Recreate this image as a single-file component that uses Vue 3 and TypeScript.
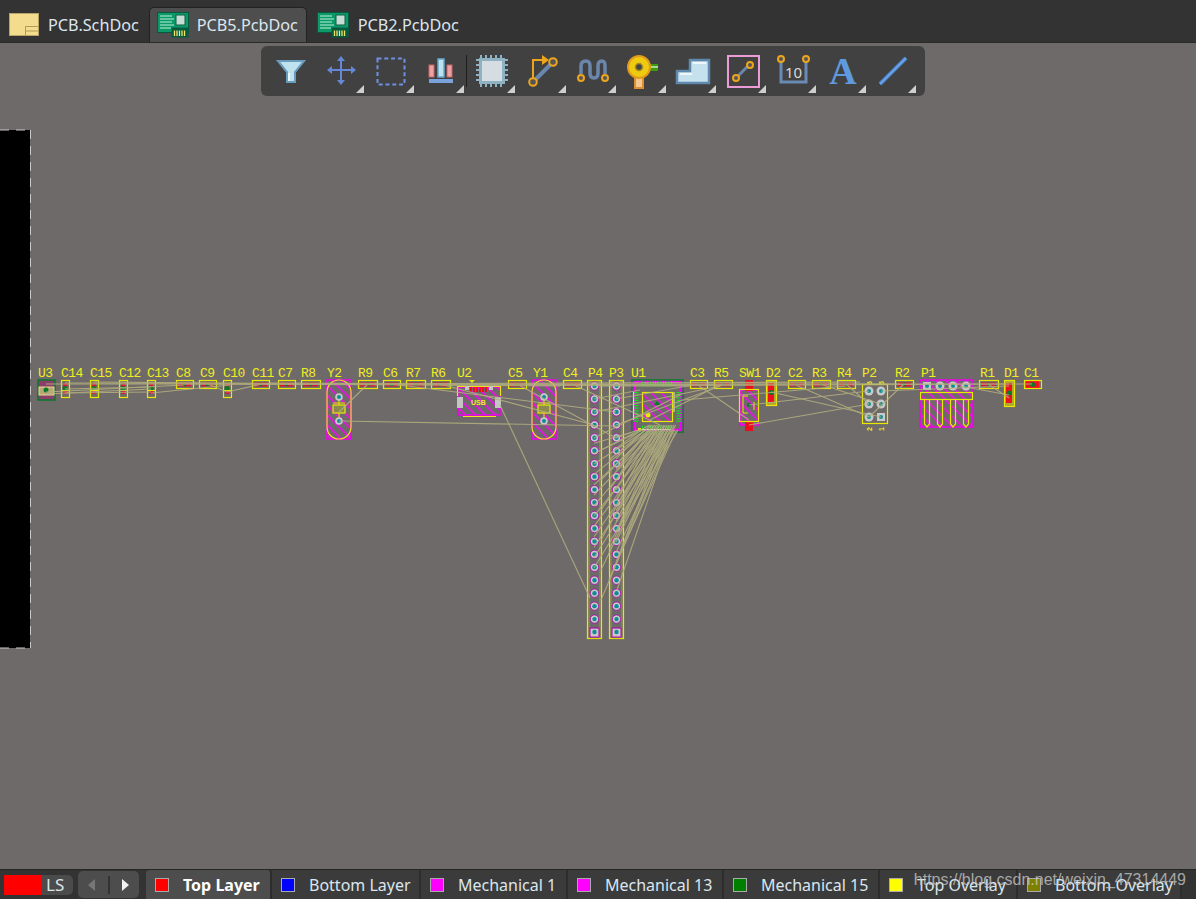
<template>
  <div class="pcb-app">
    <header class="doc-tabs">
      <div v-for="tab in docTabs" :key="tab.name" class="doc-tab" :class="{ 'doc-tab--active': tab.active }">
        <svg v-if="tab.kind === 'sch'" class="doc-icon" width="30" height="23" viewBox="0 0 30 23">
          <rect x="0.5" y="0.5" width="29" height="22" fill="#f3dc8e" stroke="#b8a468" />
          <path d="M16.5 22 V13.5 H29.5 M16.5 18 H29.5" fill="none" stroke="#b39a58" />
        </svg>
        <svg v-else class="doc-icon" width="32" height="26" viewBox="0 0 32 26">
          <rect x="0.5" y="0.5" width="31" height="20" fill="#0b9a68" stroke="#06583f" />
          <path d="M3 4 H15 M3 7 H17 M3 10 H15 M3 13 H17 M3 16 H14" stroke="#bff0da" stroke-width="1" />
          <rect x="19" y="3" width="9" height="10" fill="#c6dcd4" stroke="#0a5f47" />
          <rect x="14.500" y="15.500" width="17" height="10" fill="#07593f" />
          <path d="M17.500 18.500 V24 M20 18.500 V24 M22.500 18.500 V24 M25 18.500 V24 M27.500 18.500 V24" stroke="#f0e66c" stroke-width="1.300" />
        </svg>
        <span>{{ tab.name }}</span>
      </div>
    </header>

    <main class="canvas">
      <svg class="board" width="1196" height="826" viewBox="0 43 1196 826">
        <defs>
          <pattern id="hatch" width="7" height="7" patternUnits="userSpaceOnUse" patternTransform="rotate(-45)">
            <rect x="0" y="0" width="1.500" height="7" fill="#ff00ff" />
          </pattern>
        </defs>

        <rect x="0" y="130" width="30" height="518" fill="#000" />
        <line x1="30.500" y1="130" x2="30.500" y2="648" stroke="#c9c9c9" stroke-dasharray="9 7" />
        <line x1="0" y1="130" x2="30" y2="130" stroke="#c9c9c9" stroke-dasharray="9 7" />
        <line x1="0" y1="648" x2="30" y2="648" stroke="#c9c9c9" stroke-dasharray="9 7" />

        <!-- keep-outs and hatched bodies -->
        <g v-for="h in hatched" :key="h.x">
          <rect :x="h.x" :y="h.y" :width="h.w" :height="h.h" fill="url(#hatch)" stroke="#f000f0" stroke-width="1.500" />
        </g>

        <!-- U3 -->
        <rect x="38" y="380" width="17" height="20" fill="#8a3f6a" stroke="#0a7a28" stroke-width="1.500" />
        <rect x="39" y="387" width="15" height="8" fill="#b8a878" stroke="#e6d890" />
        <circle cx="46" cy="390" r="2.500" fill="#0a7a28" />

        <!-- passives -->
        <g v-for="p in passives" :key="p.name">
          <template v-if="p.vertical">
            <rect v-if="p.h > 20" :x="p.x" :y="p.y" :width="p.w" :height="p.h" fill="#b0a832" />
            <rect :x="p.x + 2" :y="p.y + 3" :width="p.w - 4" :height="p.h - 6" :fill="p.h > 20 ? '#ee1020' : '#d2183c'" />
            <circle :cx="p.x + p.w / 2" :cy="p.y + p.h / 2" r="2.500" fill="#0a7a28" />
            <rect :x="p.x + 0.5" :y="p.y + 0.5" :width="p.w" :height="p.h" fill="none" stroke="#e8e800" stroke-width="1.200" />
            <line v-if="p.h <= 20" :x1="p.x" :y1="p.y + p.h / 2 + 2" :x2="p.x + p.w" :y2="p.y + p.h / 2 + 2" stroke="#e8e800" />
          </template>
          <template v-else>
            <rect :x="p.x + 2" :y="p.y + (p.solid ? 1 : 2.500)" :width="p.w - 4" :height="p.solid ? 7 : 4" :fill="p.solid ? '#ee1020' : '#d2183c'" />
            <circle :cx="p.x + p.w / 2" :cy="p.y + 4.500" :r="p.solid ? 2.500 : 1.800" fill="#0a7a28" />
            <rect :x="p.x + 0.5" :y="p.y + 0.5" :width="p.w" :height="p.h" fill="none" stroke="#e8e800" stroke-width="1.200" />
          </template>
        </g>

        <!-- crystals -->
        <g v-for="cx in [339, 544]" :key="cx">
          <rect :x="cx - 12" y="380" width="24" height="59" rx="12" fill="none" stroke="#f0e020" stroke-width="1.200" />
          <line :x1="cx" y1="397" :x2="cx" :y2="421" stroke="#e8e800" />
          <rect :x="cx - 6" y="405" width="12" height="8" fill="#8a8a50" stroke="#e8e800" stroke-width="1.200" />
          <line :x1="cx - 6" y1="403" :x2="cx + 6" y2="403" stroke="#e8e800" />
          <circle :cx="cx" cy="397" r="3.800" fill="#c8c8c8" />
          <circle :cx="cx" cy="397" r="2" fill="#0a8f98" />
          <circle :cx="cx" cy="421" r="3.800" fill="#c8c8c8" />
          <circle :cx="cx" cy="421" r="2" fill="#0a8f98" />
        </g>

        <!-- U2 -->
        <path d="M457.500 396 V386.500 H500.500 V396 M463 416.500 H496" fill="none" stroke="#f0e020" stroke-width="1.200" />
        <path d="M470 389.500 H488" stroke="#e8101c" stroke-width="5" stroke-dasharray="2 1" />
        <rect x="457" y="397" width="6" height="11" fill="#c4c4c4" />
        <rect x="495" y="397" width="6" height="11" fill="#c4c4c4" />
        <rect x="465" y="386" width="4" height="4" fill="#c4c4c4" />
        <rect x="489" y="386" width="4" height="4" fill="#c4c4c4" />
        <path d="M469 380 H475 L472 383 Z" fill="#e8e800" />
        <text class="silk silk--tiny" x="471" y="405">USB</text>

        <!-- P3 / P4 headers -->
        <g v-for="col in headers" :key="col.x">
          <rect :x="col.x - 6.500" y="380.500" width="14" height="258" fill="none" stroke="#e8e800" stroke-width="1.200" />
          <rect :x="col.x - 5" y="381" width="11" height="257" fill="none" stroke="#b8b830" stroke-width="0.600" />
          <g v-for="(y, i) in padRows" :key="i">
            <rect v-if="i === padRows.length - 1" :x="col.x - 4" :y="y - 4" width="9" height="9" fill="#c8c8c8" stroke="#b000b0" />
            <circle v-else :cx="col.x + 0.500" :cy="y" r="4.200" fill="#c8c8c8" stroke="#b000b0" stroke-width="0.800" />
            <circle :cx="col.x + 0.500" :cy="y" r="2.200" fill="#0a8f98" />
          </g>
        </g>

        <!-- U1 -->
        <rect x="632" y="380" width="51" height="52" fill="none" stroke="#1d7a34" stroke-width="2" />
        <rect x="634" y="382" width="47" height="48" fill="none" stroke="#f000f0" stroke-width="2.500" />
        <path d="M642 384 H673 M642 428 H673 M636 392 V422 M679 392 V422" stroke="#10e020" stroke-width="5" stroke-dasharray="1.200 1.400" />
        <rect x="643" y="393" width="29" height="28" fill="url(#hatch)" />
        <rect x="642.500" y="392.500" width="30" height="29" fill="none" stroke="#e8e800" stroke-width="1.200" />
        <path d="M654 405 L657 401 L661 405 Z" fill="#0a7a28" />
        <circle cx="648" cy="415" r="2.500" fill="#e8e800" />
        <path d="M633.500 392 V420 M640 429.500 H671 M674 392 V412" stroke="#e0dfc0" stroke-width="1.200" />
        <rect x="638" y="428" width="3" height="3" fill="#e8e800" />

        <!-- SW1 -->
        <rect x="745" y="380" width="8" height="11" fill="#e8101c" />
        <rect x="745" y="421" width="8" height="10" fill="#e8101c" />
        <rect x="739.500" y="389.500" width="19" height="32" fill="none" stroke="#e8e800" stroke-width="1.200" />
        <path d="M748 396 H743 V413 H748 M754 402 V410" fill="none" stroke="#e8e800" />
        <circle cx="749" cy="405" r="2" fill="#0a7a28" />

        <!-- P2 -->
        <rect x="862.500" y="384.500" width="25" height="39" fill="none" stroke="#e8e800" stroke-width="1.200" />
        <g v-for="pad in p2Pads" :key="pad.key">
          <rect v-if="pad.square" :x="pad.x - 4" :y="pad.y - 4" width="8" height="8" fill="#c8c8c8" />
          <circle v-else :cx="pad.x" :cy="pad.y" r="4.500" fill="#c8c8c8" />
          <circle :cx="pad.x" :cy="pad.y" r="2" fill="#0a8f98" />
        </g>
        <text class="silk silk--tiny" transform="translate(872 431) rotate(-90)">2</text>
        <text class="silk silk--tiny" transform="translate(884 431) rotate(-90)">1</text>
        <text class="silk silk--tiny" transform="translate(872 385) rotate(-90)">6</text>
        <text class="silk silk--tiny" transform="translate(884 385) rotate(-90)">5</text>

        <!-- P1 -->
        <rect x="920.500" y="392.500" width="52" height="7" fill="none" stroke="#e8e800" stroke-width="1.200" />
        <g v-for="(x, i) in p1Pads" :key="x">
          <path :d="`M${x - 2.500} 400 V424 L${x} 427 L${x + 2.500} 424 V400`" fill="none" stroke="#e8e800" stroke-width="1.200" />
          <rect v-if="i === 0" :x="x - 4" y="382" width="8" height="8" fill="#c8c8c8" />
          <circle v-else :cx="x" cy="386" r="4.500" fill="#c8c8c8" />
          <circle :cx="x" cy="386" r="2" fill="#0a8f98" />
        </g>

        <!-- ratsnest -->
        <g stroke="#b5b17f" stroke-width="1.100" opacity="0.85">
          <line v-for="(l, i) in nets" :key="i" :x1="l[0]" :y1="l[1]" :x2="l[2]" :y2="l[3]" />
        </g>

        <text v-for="r in refs" :key="r.name" class="silk" :x="r.x" y="377">{{ r.name }}</text>
      </svg>

      <nav class="toolbar">
        <div class="tool">
          <svg width="40" height="40" viewBox="0 0 40 40"><path d="M7 10 H33 L24 21 V31 H16 V21 Z" fill="#bfe2ef" stroke="#6a9cbc" stroke-width="2" /><path d="M18 22 V30" stroke="#eaf6fb" stroke-width="2" /></svg>
        </div>
        <div class="tool tool--menu">
          <svg width="40" height="40" viewBox="0 0 40 40"><path d="M20 7 V32 M8 19 H33" stroke="#6487d6" stroke-width="2" /><path d="M20 5 L24 10 H16 Z M20 34 L16 29 H24 Z M6 19 L11 15 V23 Z M35 19 L30 15 V23 Z" fill="#6487d6" /></svg>
        </div>
        <div class="tool tool--menu">
          <svg width="40" height="40" viewBox="0 0 40 40"><rect x="6.500" y="7.500" width="27" height="26" fill="none" stroke="#6f8fe2" stroke-width="2" stroke-dasharray="4 2.800" /></svg>
        </div>
        <div class="tool tool--menu">
          <svg width="40" height="40" viewBox="0 0 40 40"><rect x="8" y="14" width="5" height="12" fill="#f0a0a0" stroke="#c06868" /><rect x="17" y="8" width="6" height="18" fill="#bfe2ef" stroke="#68a8cc" stroke-width="1.500" /><rect x="26" y="14" width="5" height="12" fill="#f0a0a0" stroke="#c06868" /><rect x="8" y="28" width="24" height="4" fill="#7aa2dc" /></svg>
        </div>
        <div class="tool-sep"></div>
        <div class="tool tool--menu">
          <svg width="40" height="40" viewBox="0 0 40 40"><path d="M9 4 V36 M14 4 V36 M19 4 V36 M24 4 V36 M29 4 V36 M4 9 H36 M4 14 H36 M4 19 H36 M4 24 H36 M4 29 H36" stroke="#8fb2c2" stroke-width="2" /><rect x="7" y="7" width="26" height="26" fill="#8fb2c2" /><rect x="10" y="10" width="20" height="20" fill="#d6dde2" /></svg>
        </div>
        <div class="tool tool--menu">
          <svg width="40" height="40" viewBox="0 0 40 40"><path d="M13 28 L27 14" stroke="#6a86ac" stroke-width="4" /><path d="M10 27 V9 H20" fill="none" stroke="#eca51c" stroke-width="2" /><path d="M19 4 L26 9 L19 14 Z" fill="#eca51c" /><circle cx="30" cy="11" r="3.800" fill="#555" stroke="#eca51c" stroke-width="2" /><circle cx="10" cy="31" r="3.800" fill="#555" stroke="#eca51c" stroke-width="2" /></svg>
        </div>
        <div class="tool tool--menu">
          <svg width="40" height="40" viewBox="0 0 40 40"><path d="M8 23 V15 Q8 10 13 10 Q17 10 17 15 V22 Q17 27 21 27 Q25 27 25 22 V15 Q25 10 29 10 Q32 10 32 15 V23" fill="none" stroke="#6a86ac" stroke-width="3.500" /><circle cx="8" cy="27" r="3" fill="#555" stroke="#eca51c" stroke-width="2" /><circle cx="32" cy="27" r="3" fill="#555" stroke="#eca51c" stroke-width="2" /></svg>
        </div>
        <div class="tool tool--menu">
          <svg width="40" height="40" viewBox="0 0 40 40"><rect x="12" y="26" width="8" height="11" fill="#f4c890" stroke="#e08f30" stroke-width="2" /><rect x="26" y="13" width="9" height="7" fill="#3c9c10" /><rect x="26" y="15" width="9" height="2" fill="#a8d890" /><circle cx="16" cy="16" r="11" fill="#eecb10" stroke="#e39a1c" stroke-width="2" /><circle cx="16" cy="16" r="3.500" fill="#444" stroke="#a88a20" stroke-width="1.500" /></svg>
        </div>
        <div class="tool tool--menu">
          <svg width="40" height="40" viewBox="0 0 40 40"><path d="M4 20 H17 V9 H36 V32 H4 Z" fill="#c5e1ed" stroke="#6088ac" stroke-width="2.500" /><path d="M7 23 H19 M20 12 H33" stroke="#eef7fb" stroke-width="2" /></svg>
        </div>
        <div class="tool tool--menu">
          <svg width="40" height="40" viewBox="0 0 40 40"><rect x="5" y="5" width="31" height="31" fill="none" stroke="#eb9cd6" stroke-width="2" /><path d="M14 26 L26 14" stroke="#6a86ac" stroke-width="3" /><circle cx="13" cy="27" r="3" fill="#555" stroke="#eca51c" stroke-width="2" /><circle cx="27" cy="14" r="3" fill="#555" stroke="#eca51c" stroke-width="2" /></svg>
        </div>
        <div class="tool tool--menu">
          <svg width="40" height="40" viewBox="0 0 40 40"><path d="M8 11 V31 H33 V11" fill="none" stroke="#6a8cb4" stroke-width="3" /><circle cx="8" cy="8" r="3" fill="#555" stroke="#eca51c" stroke-width="2" /><circle cx="33" cy="8" r="3" fill="#555" stroke="#eca51c" stroke-width="2" /><text class="tool-num" x="20.500" y="27">10</text></svg>
        </div>
        <div class="tool tool--menu">
          <svg class="tool-a-icon" width="40" height="40" viewBox="0 0 40 40"><text class="tool-a" x="20" y="33">A</text></svg>
        </div>
        <div class="tool tool--menu">
          <svg width="40" height="40" viewBox="0 0 40 40"><path d="M7 33 L33 7" stroke="#3f6ea8" stroke-width="4.500" /><path d="M7 33 L33 7" stroke="#67a0e4" stroke-width="2.500" /></svg>
        </div>
      </nav>
    </main>

    <footer class="layer-bar">
      <div class="layer-set">
        <span class="layer-set__swatch"></span>
        <span class="layer-set__label">LS</span>
      </div>
      <div class="layer-nav">
        <span class="layer-nav__arrow layer-nav__arrow--left"></span>
        <span class="layer-nav__sep"></span>
        <span class="layer-nav__arrow layer-nav__arrow--right"></span>
      </div>
      <div
        v-for="layer in layers"
        :key="layer.name"
        class="layer-tab"
        :class="{ 'layer-tab--active': layer.active }"
        :style="{ width: layer.width + 'px' }"
      >
        <span class="layer-tab__swatch" :style="{ background: layer.color }"></span>
        <span>{{ layer.name }}</span>
      </div>
      <div class="watermark">https://blog.csdn.net/weixin_47314449</div>
    </footer>
  </div>
</template>

<script setup lang="ts">
type Net = [number, number, number, number]

const docTabs = [
  { name: 'PCB.SchDoc', kind: 'sch', active: false },
  { name: 'PCB5.PcbDoc', kind: 'pcb', active: true },
  { name: 'PCB2.PcbDoc', kind: 'pcb', active: false },
]

const refs = [
  { name: 'U3', x: 38 }, { name: 'C14', x: 61 }, { name: 'C15', x: 90 }, { name: 'C12', x: 119 },
  { name: 'C13', x: 147 }, { name: 'C8', x: 176 }, { name: 'C9', x: 200 }, { name: 'C10', x: 223 },
  { name: 'C11', x: 252 }, { name: 'C7', x: 278 }, { name: 'R8', x: 301 }, { name: 'Y2', x: 327 },
  { name: 'R9', x: 358 }, { name: 'C6', x: 383 }, { name: 'R7', x: 406 }, { name: 'R6', x: 431 },
  { name: 'U2', x: 457 }, { name: 'C5', x: 508 }, { name: 'Y1', x: 533 }, { name: 'C4', x: 563 },
  { name: 'P4', x: 588 }, { name: 'P3', x: 609 }, { name: 'U1', x: 631 }, { name: 'C3', x: 690 },
  { name: 'R5', x: 714 }, { name: 'SW1', x: 739 }, { name: 'D2', x: 766 }, { name: 'C2', x: 788 },
  { name: 'R3', x: 812 }, { name: 'R4', x: 837 }, { name: 'P2', x: 862 }, { name: 'R2', x: 895 },
  { name: 'P1', x: 921 }, { name: 'R1', x: 980 }, { name: 'D1', x: 1004 }, { name: 'C1', x: 1024 },
]

const hatched = [
  { x: 327, y: 380, w: 24, h: 59 },
  { x: 458, y: 387, w: 42, h: 28 },
  { x: 532, y: 380, w: 24, h: 59 },
  { x: 740, y: 390, w: 19, h: 35 },
  { x: 920, y: 380, w: 53, h: 47 },
]

const flat = (name: string, x: number, w: number, solid = false) => ({ name, x, y: 380, w, h: 8, vertical: false, solid })
const tall = (name: string, x: number, w: number, h: number) => ({ name, x, y: 380, w, h, vertical: true, solid: false })

const passives = [
  tall('C14', 61, 8, 17), tall('C15', 90, 8, 17), tall('C12', 119, 8, 17), tall('C13', 147, 8, 17),
  flat('C8', 176, 17), flat('C9', 199, 17), tall('C10', 223, 8, 17), flat('C11', 252, 17),
  flat('C7', 278, 17), flat('R8', 301, 19), flat('R9', 358, 19), flat('C6', 383, 17),
  flat('R7', 406, 19), flat('R6', 431, 19), flat('C5', 508, 18), flat('C4', 563, 18),
  flat('C3', 690, 17), flat('R5', 714, 18), tall('D2', 766, 10, 25), flat('C2', 788, 17),
  flat('R3', 812, 18), flat('R4', 837, 18), flat('R2', 895, 18), flat('R1', 979, 19),
  tall('D1', 1004, 10, 26), flat('C1', 1024, 17, true),
]

const headers = [{ x: 594 }, { x: 616 }]
const padRows = Array.from({ length: 20 }, (_, i) => 386 + i * 12.95)

const p2Pads = [391, 404, 417].flatMap((y) =>
  [869, 881].map((x) => ({ key: `${x}-${y}`, x, y, square: x === 881 && y === 417 })),
)
const p1Pads = [927, 940, 953, 966]

// airwires: long bus along the top edge, then the fan from U1 down into the headers
const nets: Net[] = [
  [46, 384, 1032, 384], [65, 383, 640, 385], [94, 382, 560, 386], [184, 384, 690, 386],
  [270, 383, 720, 385], [310, 384, 860, 382], [440, 385, 900, 384], [600, 386, 1009, 384],
  [46, 392, 184, 385], [46, 394, 151, 389], [65, 389, 151, 387], [65, 393, 151, 392],
  [151, 393, 230, 385], [208, 384, 227, 392], [227, 392, 262, 384], [339, 421, 616, 426],
  [339, 412, 368, 384], [440, 384, 594, 425], [391, 384, 616, 412], [500, 405, 590, 598],
  [517, 384, 616, 438], [572, 384, 660, 425], [616, 399, 698, 384], [594, 399, 640, 390],
  [594, 412, 720, 386], [616, 425, 723, 385], [594, 438, 680, 395], [698, 385, 749, 420],
  [722, 384, 650, 420], [749, 425, 869, 404], [749, 405, 869, 391], [771, 392, 881, 417],
  [796, 385, 869, 417], [820, 384, 881, 404], [846, 384, 869, 404], [904, 384, 869, 417],
  [988, 384, 1009, 398], [960, 386, 1009, 395], [1009, 386, 881, 391], [683, 400, 846, 386],
]
for (let i = 0; i < 26; i++) {
  const fromX = 638 + i * 1.600
  nets.push([fromX, 430, i % 2 ? 594 : 616, 438 + i * 5.200])
}
for (let i = 0; i < 16; i++) {
  nets.push([650 + i * 1.700, 425, 601 + (i % 3) * 8, 450 + i * 10])
}

const layers = [
  { name: 'Top Layer', color: '#ff0000', active: true, width: 126 },
  { name: 'Bottom Layer', color: '#0000ff', active: false, width: 149 },
  { name: 'Mechanical 1', color: '#ff00ff', active: false, width: 147 },
  { name: 'Mechanical 13', color: '#ff00ff', active: false, width: 156 },
  { name: 'Mechanical 15', color: '#008000', active: false, width: 156 },
  { name: 'Top Overlay', color: '#ffff00', active: false, width: 138 },
  { name: 'Bottom Overlay', color: '#808000', active: false, width: 164 },
]
</script>

<style>
html,
body {
  margin: 0;
  background: #333;
}
</style>

<style scoped>
.pcb-app {
  display: flex;
  flex-direction: column;
  width: 1196px;
  height: 899px;
  overflow: hidden;
  font-family: 'Noto Sans', 'Open Sans', sans-serif;
  color: #dbe6ee;
  background: #333;
}

.doc-tabs {
  display: flex;
  flex: none;
  align-items: flex-end;
  height: 43px;
  padding-left: 9px;
  box-sizing: border-box;
  border-bottom: 1px solid #2a2a2a;
}

.doc-tab {
  display: flex;
  align-items: center;
  gap: 9px;
  height: 35px;
  padding: 0;
  box-sizing: border-box;
  font-size: 16.2px;
  margin-right: 10px;
}

.doc-tab--active {
  gap: 8px;
  width: 158px;
  padding: 0 7px;
  background: #4e4e4e;
  border: 1px solid #222;
  border-bottom: 0;
  border-radius: 5px 5px 0 0;
}

.doc-icon {
  flex: none;
}

.canvas {
  position: relative;
  flex: 1;
  background: #6e6a69;
}

.board {
  display: block;
}

.silk {
  font-family: 'Liberation Mono', monospace;
  font-size: 13px;
  letter-spacing: -0.6px;
  fill: #f0ee20;
}

.silk--tiny {
  font-family: 'Liberation Sans', sans-serif;
  font-size: 7px;
  font-weight: 700;
  letter-spacing: 0;
}

.toolbar {
  position: absolute;
  top: 3px;
  left: 261px;
  display: flex;
  align-items: center;
  width: 664px;
  height: 50px;
  box-sizing: border-box;
  padding-left: 5px;
  background: #414141;
  border-radius: 6px;
}

.tool {
  position: relative;
  display: flex;
  align-items: center;
  justify-content: center;
  flex: none;
  width: 50.1px;
  height: 50px;
}

.tool--menu::after {
  position: absolute;
  right: 2px;
  bottom: 3px;
  width: 0;
  height: 0;
  content: '';
  border-bottom: 8px solid #cfcfcf;
  border-left: 8px solid transparent;
}

.tool-sep {
  flex: none;
  width: 1px;
  height: 32px;
  background: #1f1f1f;
}

.tool-num {
  font-family: 'Noto Sans', sans-serif;
  font-size: 15px;
  text-anchor: middle;
  fill: #d8d8d8;
}

.tool-a-icon {
  overflow: visible;
}

.tool-a {
  font-family: 'Liberation Serif', serif;
  font-size: 38px;
  font-weight: 700;
  text-anchor: middle;
  fill: #5f9ade;
}

.layer-bar {
  position: relative;
  display: flex;
  flex: none;
  align-items: center;
  height: 30px;
  padding-left: 4px;
  box-sizing: border-box;
  font-size: 16px;
  background: #333;
  border-top: 1px solid #262626;
}

.layer-set {
  display: flex;
  align-items: center;
  width: 69px;
  height: 20px;
  margin-right: 5px;
  background: #4b4b4b;
  border-radius: 0 5px 5px 0;
}

.layer-set__swatch {
  width: 37px;
  height: 20px;
  background: #ff0000;
}

.layer-set__label {
  padding-left: 5px;
  font-size: 17px;
}

.layer-nav {
  display: flex;
  align-items: center;
  justify-content: space-between;
  width: 61px;
  height: 27px;
  padding: 0 10px;
  box-sizing: border-box;
  margin-right: 7px;
  background: #4d4d4d;
  border-radius: 5px;
}

.layer-nav__arrow {
  width: 0;
  height: 0;
  border-top: 6px solid transparent;
  border-bottom: 6px solid transparent;
}

.layer-nav__arrow--left {
  border-right: 7px solid #777;
}

.layer-nav__arrow--right {
  border-left: 7px solid #f2f2f2;
}

.layer-nav__sep {
  width: 2px;
  height: 18px;
  background: #333;
}

.layer-tab {
  display: flex;
  align-items: center;
  gap: 14px;
  height: 29px;
  padding-left: 9px;
  box-sizing: border-box;
  flex: none;
  background: #3b3b3b;
  border-right: 2px solid #2d2d2d;
}

.layer-tab--active {
  font-weight: 700;
  color: #fff;
  background: #4d4d4d;
  border-radius: 4px 4px 0 0;
}

.layer-tab__swatch {
  flex: none;
  width: 14px;
  height: 14px;
  box-sizing: border-box;
  border: 1px solid #aaa;
}

.watermark {
  position: absolute;
  top: 1px;
  right: 10px;
  font-family: 'Liberation Sans', sans-serif;
  font-size: 16px;
  color: rgb(205 205 205 / 75%);
  white-space: nowrap;
}
</style>
